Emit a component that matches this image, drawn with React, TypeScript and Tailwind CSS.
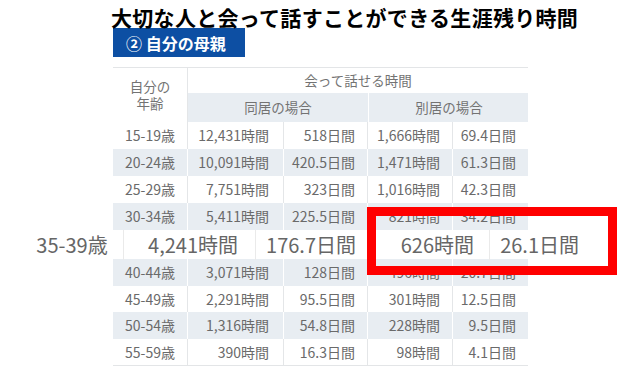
const rowsTop = [
  ['15-19歳', '12,431時間', '518日間', '1,666時間', '69.4日間'],
  ['20-24歳', '10,091時間', '420.5日間', '1,471時間', '61.3日間'],
  ['25-29歳', '7,751時間', '323日間', '1,016時間', '42.3日間'],
  ['30-34歳', '5,411時間', '225.5日間', '821時間', '34.2日間'],
]

const rowsBottom = [
  ['40-44歳', '3,071時間', '128日間', '496時間', '20.7日間'],
  ['45-49歳', '2,291時間', '95.5日間', '301時間', '12.5日間'],
  ['50-54歳', '1,316時間', '54.8日間', '228時間', '9.5日間'],
  ['55-59歳', '390時間', '16.3日間', '98時間', '4.1日間'],
]

const highlight = ['35-39歳', '4,241時間', '176.7日間', '626時間', '26.1日間']

function Row({ cells, shaded, tall }: { cells: string[]; shaded: boolean; tall?: boolean }) {
  const line = shaded ? 'border-white' : 'border-[#e4e6e8]'
  return (
    <div
      className={`grid grid-cols-[74px_96px_84px_85px_76px] ${tall ? 'h-[27px]' : 'h-[26px]'} ${
        shaded ? 'bg-[#e8edf2]' : 'bg-white'
      }`}
    >
      <div className="flex items-center justify-center">{cells[0]}</div>
      <div className={`flex items-center justify-end border-l pr-[14px] ${line}`}>{cells[1]}</div>
      <div className={`flex items-center justify-end border-l pr-[12px] ${line}`}>{cells[2]}</div>
      <div className={`flex items-center justify-end border-l pr-[12px] ${line}`}>{cells[3]}</div>
      <div className={`flex items-center justify-end border-l pr-[12px] ${line}`}>{cells[4]}</div>
    </div>
  )
}

export default function App() {
  return (
    <div
      className="relative h-[366px] w-[624px] overflow-hidden bg-white"
      style={{ fontFamily: '"Noto Sans CJK JP", "Noto Sans", sans-serif' }}
    >
      <h1 className="pl-[111px] pt-[7px] text-[21px] leading-[21px] font-bold tracking-[0.3px] text-black">
        大切な人と会って話すことができる生涯残り時間
      </h1>

      <div className="ml-[113px] flex h-[29px] w-[132px] items-center pl-[13px] text-[16px] font-bold text-white bg-[#0d4fa3]">
        ② 自分の母親
      </div>

      <div className="ml-[113px] mt-[10px] w-[415px] border-t border-[#e3e5e7] text-[14px] text-[#6a6a6a]">
        {/* header */}
        <div className="grid grid-cols-[74px_341px] text-[13.5px] text-[#737373]">
          <div className="flex items-center justify-center">
            <p className="text-center leading-[17px]">
              自分の
              <br />
              年齢
            </p>
          </div>
          <div className="border-l border-[#e4e6e8]">
            <div className="flex h-[25px] items-center justify-center">会って話せる時間</div>
            <div className="grid h-[29px] grid-cols-[180px_161px] bg-[#e8edf2]">
              <div className="flex items-center justify-center">同居の場合</div>
              <div className="flex items-center justify-center border-l border-white">別居の場合</div>
            </div>
          </div>
        </div>

        {rowsTop.map((r, i) => (
          <Row key={r[0]} cells={r} shaded={i % 2 === 1} tall />
        ))}

        {/* enlarged row */}
        <div className="ml-[-92px] grid h-[29px] w-[573px] grid-cols-[102px_132px_116px_118px_105px] bg-white text-[20px] text-[#666]">
          <div className="flex items-center justify-center">{highlight[0]}</div>
          <div className="flex items-center justify-end border-l border-[#eaeaea] pr-[17px]">{highlight[1]}</div>
          <div className="flex items-center justify-end border-l border-[#eaeaea] pr-[15px]">{highlight[2]}</div>
          <div className="flex items-center justify-end border-l border-[#eaeaea] pr-[15px]">{highlight[3]}</div>
          <div className="flex items-center justify-end border-l border-[#eaeaea] pr-[15px]">{highlight[4]}</div>
        </div>

        {rowsBottom.map((r, i) => (
          <Row key={r[0]} cells={r} shaded={i % 2 === 0} tall={i % 2 === 0} />
        ))}
        <div className="border-t border-[#e3e5e7]" />
      </div>

      <div className="absolute left-[367px] top-[207px] h-[68px] w-[250px] border-[9px] border-[#ff0000]" />
    </div>
  )
}
